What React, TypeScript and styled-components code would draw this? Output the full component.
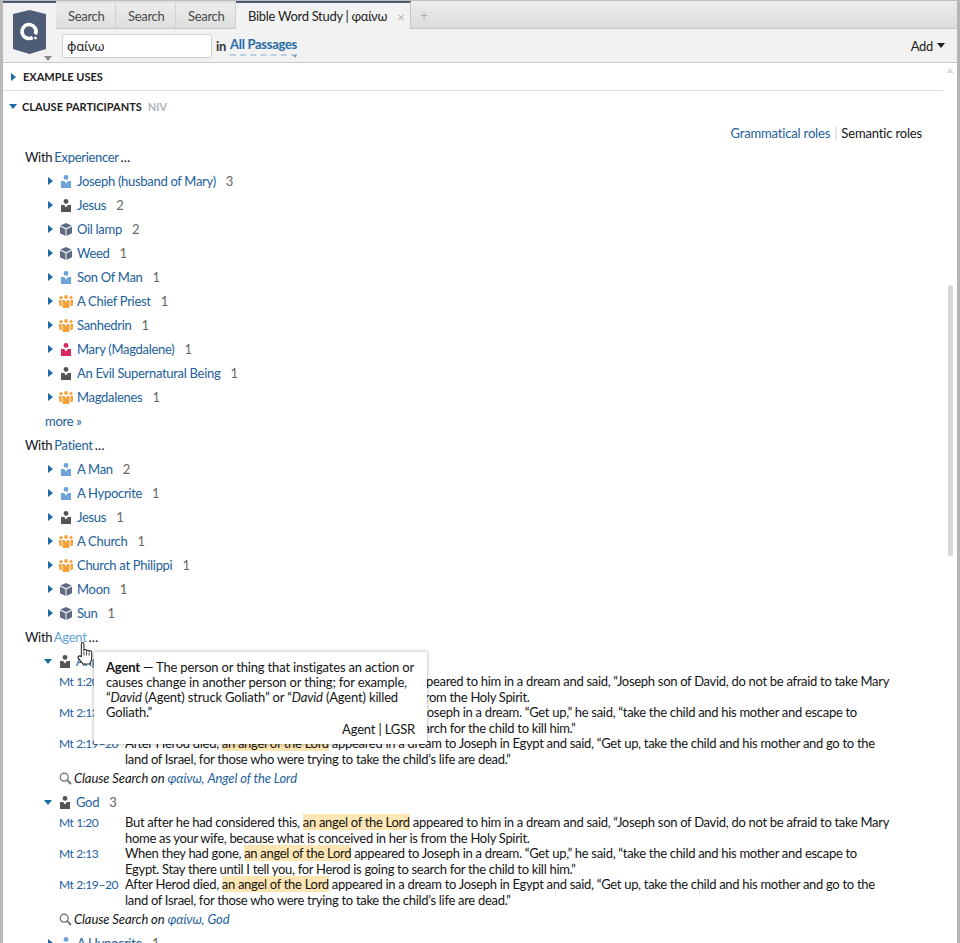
import React from "react";
import styled, { createGlobalStyle } from "styled-components";

const Global = createGlobalStyle`
  html, body { margin: 0; padding: 0; background: #fff; }
  body { font-family: "Lato", "Noto Sans", "Liberation Sans", sans-serif; font-size: 13px; letter-spacing: -0.3px; color: #141414; }
`;

const Frame = styled.div`
  position: relative; box-sizing: border-box; width: 960px; height: 943px; overflow: hidden;
  border-left: 3px solid #b9b9b9; border-right: 3px solid #b4b4b4; border-top: 1px solid #bdbdbd; background: #fff;
`;
const Header = styled.header`
  display: grid; grid-template-columns: 53px 1fr; grid-template-rows: 28px 33px; height: 61px;
  border-bottom: 1px solid #c9c9c9; background: #f2f2f2; box-sizing: content-box;
`;
const LogoCell = styled.div`
  grid-row: 1 / 3; position: relative; border-top: 2px solid #4f5b72; padding: 7px 0 0 10px; box-sizing: border-box;
`;
const LogoCaret = styled.span`
  position: absolute; left: 41px; top: 53px; width: 0; height: 0;
  border-left: 4px solid transparent; border-right: 4px solid transparent; border-top: 5px solid #8a8a8a;
`;
const TabStrip = styled.div`
  display: flex; align-items: stretch; background: linear-gradient(#ececec, #dcdcdc); border-bottom: 1px solid #c6c6c6; box-sizing: border-box;
`;
const Tab = styled.div<{ $active?: boolean }>`
  display: flex; align-items: center; gap: 10px; padding: ${(p) => (p.$active ? "0 8px 0 12px" : "0 12px")}; box-sizing: border-box;
  width: ${(p) => (p.$active ? "175px" : "60px")};
  white-space: nowrap; color: ${(p) => (p.$active ? "#222" : "#4a4a4a")};
  background: ${(p) => (p.$active ? "#f2f2f2" : "linear-gradient(#ececec, #dedede)")};
  border-right: 1px solid ${(p) => (p.$active ? "#c6c6c6" : "#d2d2d2")};
  border-top: 2px solid ${(p) => (p.$active ? "#4f5b72" : "transparent")};
  margin-bottom: ${(p) => (p.$active ? "-1px" : "0")};
`;
const TabClose = styled.span`
  color: #b5b5b5; font-size: 14px; margin-left: auto;
`;
const TabAdd = styled.span`
  align-self: center; margin-left: 9px; color: #b0b0b0; font-size: 14px;
`;
const Toolbar = styled.div`
  display: flex; align-items: center; padding: 0 12px 0 6px; gap: 4px;
`;
const SearchInput = styled.div`
  box-sizing: border-box; width: 150px; height: 24px; padding: 0 4px; display: flex; align-items: center;
  background: #fff; border: 1px solid #d0d0d0; border-radius: 3px; font-family: "Noto Sans", sans-serif; font-size: 13px; letter-spacing: -0.2px; color: #222;
`;
const InLabel = styled.span`
  font-weight: 700; color: #333;
`;
const Passage = styled.span`
  position: relative; font-weight: 700; color: #256aa6; border-bottom: 2px dashed #b6cfe2; line-height: 17px; padding-bottom: 1px; margin-top: 1px;
  &::after {
    content: ""; position: absolute; right: 0; bottom: -4px; width: 0; height: 0;
    border-left: 2.5px solid transparent; border-right: 2.5px solid transparent; border-top: 3px solid #7f9fb8;
  }
`;
const AddButton = styled.span`
  margin-left: auto; display: flex; align-items: center; gap: 4px; color: #222;
`;
const DownCaret = styled.span`
  width: 0; height: 0; border-left: 4px solid transparent; border-right: 4px solid transparent; border-top: 5px solid #222;
`;

const Body = styled.main`
  padding: 0;
`;
const SectionHeader = styled.div<{ $h: number; $rule?: boolean }>`
  display: flex; align-items: center; gap: 6px; height: ${(p) => p.$h}px; margin-right: 14px; padding-left: 7px; box-sizing: border-box;
  font-size: 11px; font-weight: 700; letter-spacing: 0; color: #222;
  border-bottom: ${(p) => (p.$rule ? "1px solid #dcdcdc" : "none")};
`;
const Niv = styled.span`
  color: #aeb4ba; font-weight: 700;
`;
const ArrowRight = styled.span`
  display: inline-block; flex: none; width: 0; height: 0;
  border-top: 4px solid transparent; border-bottom: 4px solid transparent; border-left: 5px solid #1b6ca8; margin: 0 1px;
`;
const ArrowDown = styled.span`
  display: inline-block; flex: none; width: 0; height: 0;
  border-left: 4.5px solid transparent; border-right: 4.5px solid transparent; border-top: 5.5px solid #1b6ca8; margin: 0 -1px;
`;
const ItemArrowDown = styled(ArrowDown)`
  margin: 0 1px 0 -3px;
`;
const RoleRow = styled.div`
  display: flex; justify-content: flex-end; align-items: center; height: 24px; padding-right: 35px; gap: 4px; letter-spacing: -0.16px;
`;
const Link = styled.a<{ $hover?: boolean }>`
  color: ${(p) => (p.$hover ? "#5f9fd4" : "#22609a")}; text-decoration: none;
`;
const RefLink = styled(Link)`
  font-size: 12px; letter-spacing: -0.4px;
`;
const RoleSep = styled.span`
  color: #ccc;
`;
const RoleActive = styled.span`
  color: #141414;
`;
const WithRow = styled.div`
  position: relative; height: 24px; line-height: 24px; padding-left: 22px; word-spacing: -1px; color: #141414;
`;
const ItemRow = styled.div`
  display: flex; align-items: center; height: 24px; padding-left: 44px;
`;
const IconSlot = styled.span`
  display: flex; width: 16px; justify-content: center; margin: 0 3px 0 4px; flex: none;
`;
const Count = styled.span`
  margin-left: 10px; color: #666;
`;
const MoreRow = styled.div`
  display: flex; align-items: center; height: 24px; padding-left: 42px;
`;
const Verses = styled.div`
  padding: 1px 0 0 56px; margin-bottom: -1px;
`;
const Verse = styled.div`
  display: grid; grid-template-columns: 66px 1fr; line-height: 15.5px; white-space: nowrap;
`;
const Mark = styled.span`
  background: #fde6b3;
`;
const ClauseRow = styled.div`
  display: flex; align-items: center; gap: 2px; height: 24px; padding-left: 56px; font-style: italic; letter-spacing: -0.1px;
`;
const Tooltip = styled.div`
  position: absolute; z-index: 3; left: 91px; top: 27px; width: 333px; height: 92px; box-sizing: border-box; padding: 8px 12px 0 12px;
  background: #fff; box-shadow: 0 0 4px rgba(0,0,0,.35); line-height: 15px; white-space: nowrap; letter-spacing: -0.17px; word-spacing: 0;
`;
const TipFoot = styled.div`
  text-align: right; margin-top: 2px;
`;
const Thumb = styled.div`
  position: absolute; right: 4px; top: 284px; width: 5px; height: 271px; background: #d7d7d7; border-radius: 3px;
`;
const ScrollUp = styled.div`
  position: absolute; right: 3px; top: 67px; width: 0; height: 0;
  border-left: 4px solid transparent; border-right: 4px solid transparent; border-bottom: 5px solid #dcdcdc;
`;
const Cursor = styled.svg`
  position: absolute; z-index: 4; left: 73px; top: 640px;
`;

const Logo = () => (
  <svg width="33" height="44" viewBox="0 0 33 44">
    <path d="M16.5 0 L33 4 V39 L16.5 44 L0 39 V4 Z" fill="#4e5c78" />
    <circle cx="16" cy="21.5" r="7" fill="none" stroke="#fff" strokeWidth="3.6" strokeDasharray="39.5 4.5" transform="rotate(58 16 21.5)" />
    <path d="M21.5 27 L23.5 29" stroke="#fff" strokeWidth="2" />
  </svg>
);
const Person = ({ c }: { c: string }) => (
  <svg width="10" height="13" viewBox="0 0 10 13">
    <circle cx="5" cy="2.4" r="2.4" fill={c} />
    <path d="M0 6 H3.2 L5 8.4 L6.8 6 H10 V13 H0 Z" fill={c} />
  </svg>
);
const Cube = () => (
  <svg width="12" height="13" viewBox="0 0 12 13">
    <path d="M6 0 L11.6 2.6 L6 5.2 L.4 2.6 Z" fill="#5f6b80" />
    <path d="M0 3.6 L5.5 6.2 V13 L0 10.2 Z" fill="#5f6b80" />
    <path d="M12 3.6 L6.5 6.2 V13 L12 10.2 Z" fill="#5f6b80" />
  </svg>
);
const Group = () => (
  <svg width="14" height="13" viewBox="0 0 14 13">
    <g fill="#f5a23b">
      <circle cx="7" cy="2" r="1.9" />
      <circle cx="2" cy="2.6" r="1.6" />
      <circle cx="12" cy="2.6" r="1.6" />
      <path d="M3.5 5 H5.4 L7 6.8 L8.6 5 H10.5 V13 H3.5 Z" />
      <path d="M0 5 H2.6 V11 H1 L0 10 Z" />
      <path d="M14 5 H11.4 V11 H13 L14 10 Z" />
    </g>
  </svg>
);
const Glass = () => (
  <svg width="13" height="13" viewBox="0 0 13 13" fill="none" stroke="#707070">
    <circle cx="5.2" cy="5.2" r="4" strokeWidth="1.2" />
    <path d="M8.2 8.2 L12 12" strokeWidth="1.8" />
  </svg>
);

type Kind = "blue" | "dark" | "red" | "cube" | "group";
const KindIcon = ({ k }: { k: Kind }) => {
  if (k === "cube") return <Cube />;
  if (k === "group") return <Group />;
  return <Person c={k === "blue" ? "#6fa3dc" : k === "red" ? "#d6275f" : "#555"} />;
};

const Item = ({ k, name, n, open }: { k: Kind; name: string; n: number; open?: boolean }) => (
  <ItemRow>
    {open ? <ItemArrowDown /> : <ArrowRight />}
    <IconSlot><KindIcon k={k} /></IconSlot>
    <Link>{name}</Link>
    <Count>{n}</Count>
  </ItemRow>
);

const experiencers: [Kind, string, number][] = [
  ["blue", "Joseph (husband of Mary)", 3],
  ["dark", "Jesus", 2],
  ["cube", "Oil lamp", 2],
  ["cube", "Weed", 1],
  ["blue", "Son Of Man", 1],
  ["group", "A Chief Priest", 1],
  ["group", "Sanhedrin", 1],
  ["red", "Mary (Magdalene)", 1],
  ["dark", "An Evil Supernatural Being", 1],
  ["group", "Magdalenes", 1],
];
const patients: [Kind, string, number][] = [
  ["blue", "A Man", 2],
  ["blue", "A Hypocrite", 1],
  ["dark", "Jesus", 1],
  ["group", "A Church", 1],
  ["group", "Church at Philippi", 1],
  ["cube", "Moon", 1],
  ["cube", "Sun", 1],
];

const VerseBlock = () => (
  <Verses>
    <Verse>
      <RefLink>Mt 1:20</RefLink>
      <span>But after he had considered this, <Mark>an angel of the Lord</Mark> appeared to him in a dream and said, “Joseph son of David, do not be afraid to take Mary<br />home as your wife, because what is conceived in her is from the Holy Spirit.</span>
    </Verse>
    <Verse>
      <RefLink>Mt 2:13</RefLink>
      <span>When they had gone, <Mark>an angel of the Lord</Mark> appeared to Joseph in a dream. “Get up,” he said, “take the child and his mother and escape to<br />Egypt. Stay there until I tell you, for Herod is going to search for the child to kill him.”</span>
    </Verse>
    <Verse>
      <RefLink>Mt 2:19–20</RefLink>
      <span>After Herod died, <Mark>an angel of the Lord</Mark> appeared in a dream to Joseph in Egypt and said, “Get up, take the child and his mother and go to the<br />land of Israel, for those who were trying to take the child’s life are dead.”</span>
    </Verse>
  </Verses>
);

const Clause = ({ who }: { who: string }) => (
  <ClauseRow>
    <Glass />
    <span>Clause Search on <Link>φαίνω, {who}</Link></span>
  </ClauseRow>
);

export default function App() {
  return (
    <>
      <Global />
      <Frame>
        <Header>
          <LogoCell>
            <Logo />
            <LogoCaret />
          </LogoCell>
          <TabStrip>
            <Tab>Search</Tab>
            <Tab>Search</Tab>
            <Tab>Search</Tab>
            <Tab $active>Bible Word Study | φαίνω<TabClose>×</TabClose></Tab>
            <TabAdd>+</TabAdd>
          </TabStrip>
          <Toolbar>
            <SearchInput>φαίνω</SearchInput>
            <InLabel>in</InLabel>
            <Passage>All Passages</Passage>
            <AddButton>Add <DownCaret /></AddButton>
          </Toolbar>
        </Header>
        <Body>
          <SectionHeader $h={28} $rule><ArrowRight />EXAMPLE USES</SectionHeader>
          <SectionHeader $h={30}><ArrowDown />CLAUSE PARTICIPANTS <Niv>NIV</Niv></SectionHeader>
          <RoleRow><Link>Grammatical roles</Link><RoleSep>|</RoleSep><RoleActive>Semantic roles</RoleActive></RoleRow>
          <WithRow>With <Link>Experiencer</Link> …</WithRow>
          {experiencers.map(([k, name, n], i) => <Item key={i} k={k} name={name} n={n} />)}
          <MoreRow><Link>more »</Link></MoreRow>
          <WithRow>With <Link>Patient</Link> …</WithRow>
          {patients.map(([k, name, n], i) => <Item key={i} k={k} name={name} n={n} />)}
          <WithRow>
            With <Link $hover>Agent</Link> …
            <Tooltip>
              <b>Agent</b> — The person or thing that instigates an action or<br />
              causes change in another person or thing; for example,<br />
              “<i>David</i> (Agent) struck Goliath” or “<i>David</i> (Agent) killed<br />
              Goliath.”
              <TipFoot>Agent | LGSR</TipFoot>
            </Tooltip>
          </WithRow>
          <Item k="dark" name="Angel of the Lord" n={3} open />
          <VerseBlock />
          <Clause who="Angel of the Lord" />
          <Item k="dark" name="God" n={3} open />
          <VerseBlock />
          <Clause who="God" />
          <Item k="blue" name="A Hypocrite" n={1} />
        </Body>
        <ScrollUp />
        <Thumb />
        <Cursor width="19" height="25" viewBox="0 0 18 24">
          <path d="M5 15 L5 3 C5 1 7.5 1 7.5 3 V9 C8 7.8 10 8 10 9.5 C10.5 8.4 12.4 8.6 12.5 10 C13 9 15 9.2 15 11 V16 C15 19 14 20 13 22 H6.5 L2 16.5 C1 15 3 13.4 5 15 Z" fill="#fff" stroke="#222" strokeWidth="1" strokeLinejoin="round" />
          <path d="M7.5 10 V14 M10 10 V14 M12.5 11 V14" stroke="#222" strokeWidth=".8" fill="none" />
        </Cursor>
      </Frame>
    </>
  );
}
